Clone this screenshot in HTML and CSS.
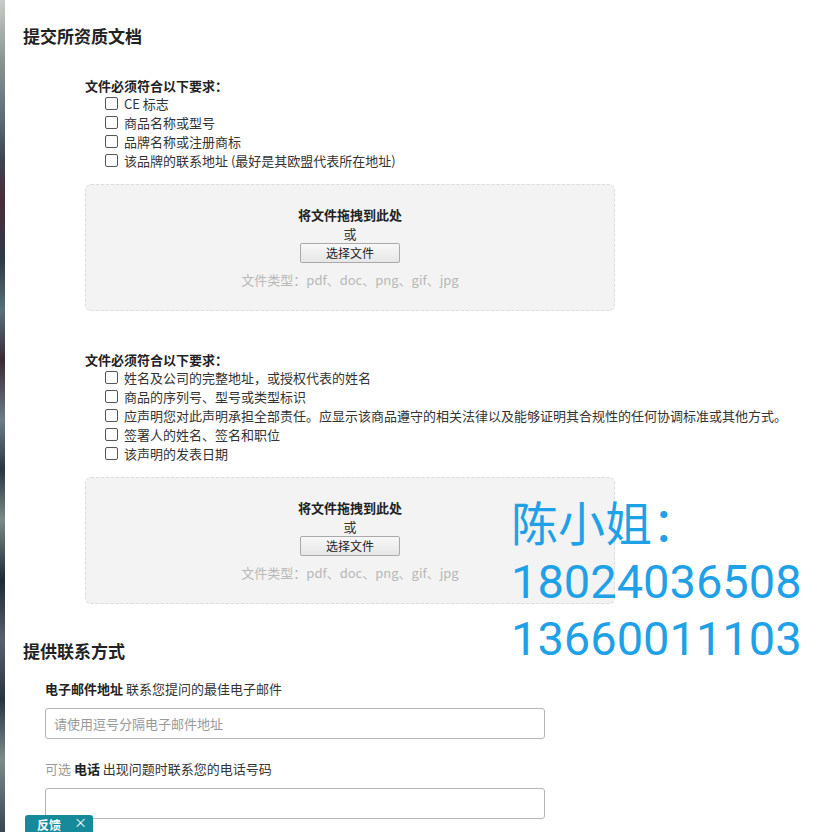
FILE: index.html
```html
<!DOCTYPE html>
<html lang="zh-CN">
<head>
<meta charset="utf-8">
<title>提交所资质文档</title>
<link rel="stylesheet" href="styles.css">
</head>
<body>
<div class="edge"></div>
<main class="page">
  <h2 class="section-title">提交所资质文档</h2>

  <div class="req-block first">
    <div class="req-label">文件必须符合以下要求：</div>
    <ul class="req-list">
      <li><span class="box"></span>CE 标志</li>
      <li><span class="box"></span>商品名称或型号</li>
      <li><span class="box"></span>品牌名称或注册商标</li>
      <li><span class="box"></span>该品牌的联系地址 (最好是其欧盟代表所在地址)</li>
    </ul>
    <div class="dropzone">
      <div class="drop-title">将文件拖拽到此处</div>
      <div class="drop-or">或</div>
      <button class="choose" type="button">选择文件</button>
      <div class="drop-types">文件类型：pdf、doc、png、gif、jpg</div>
    </div>
  </div>

  <div class="req-block second">
    <div class="req-label">文件必须符合以下要求：</div>
    <ul class="req-list">
      <li><span class="box"></span>姓名及公司的完整地址，或授权代表的姓名</li>
      <li><span class="box"></span>商品的序列号、型号或类型标识</li>
      <li><span class="box"></span>应声明您对此声明承担全部责任。应显示该商品遵守的相关法律以及能够证明其合规性的任何协调标准或其他方式。</li>
      <li><span class="box"></span>签署人的姓名、签名和职位</li>
      <li><span class="box"></span>该声明的发表日期</li>
    </ul>
    <div class="dropzone">
      <div class="drop-title">将文件拖拽到此处</div>
      <div class="drop-or">或</div>
      <button class="choose" type="button">选择文件</button>
      <div class="drop-types">文件类型：pdf、doc、png、gif、jpg</div>
    </div>
  </div>

  <h2 class="section-title contact">提供联系方式</h2>

  <div class="field">
    <div class="field-label"><b>电子邮件地址</b> 联系您提问的最佳电子邮件</div>
    <input class="text-input" type="text" placeholder="请使用逗号分隔电子邮件地址">
  </div>
  <div class="field phone">
    <div class="field-label"><span class="opt">可选</span> <b>电话</b> 出现问题时联系您的电话号码</div>
    <input class="text-input" type="text">
  </div>
</main>

<div class="watermark">陈小姐：<br>18024036508<br>13660011103</div>

<div class="feedback"><span class="fb-text">反馈</span><span class="fb-close">×</span></div>
</body>
</html>
```

FILE: styles.css
```css
html, body {
  margin: 0;
  padding: 0;
  background: #ffffff;
}
body {
  font-family: "Noto Sans CJK SC", "Noto Sans", "Liberation Sans", sans-serif;
  font-size: 13px;
  color: #222;
  width: 834px;
  height: 832px;
  overflow: hidden;
  position: relative;
}
.edge {
  position: absolute;
  left: 0;
  top: 0;
  width: 5px;
  height: 832px;
  background: linear-gradient(to bottom, #c9ccc8 0, #8a9590 60px, #5d6a78 120px, #3c4450 160px, #4a2c38 200px, #2e3a44 260px, #58707c 310px, #3a2a34 360px, #6a7e88 420px, #2a3640 470px, #7a8a86 520px, #1e2a34 580px, #5a5e72 640px, #2a3440 700px, #7e8a8a 760px, #3a4650 832px);
}
.page {
  padding: 24px 0 0 23px;
}
.section-title {
  margin: 0;
  font-size: 17px;
  line-height: 24px;
  font-weight: bold;
  color: #222;
}
.req-block {
  margin-left: 62px;
  width: 530px;
}
.req-block.first { margin-top: 29px; }
.req-block.second { margin-top: 40px; }
.req-label {
  font-weight: bold;
  line-height: 17px;
  color: #222;
}
.req-list {
  list-style: none;
  margin: 0;
  padding: 0 0 0 20px;
  white-space: nowrap;
}
.req-list li {
  line-height: 19px;
  height: 19px;
  display: flex;
  align-items: center;
  color: #333;
}
.box {
  width: 11px;
  height: 11px;
  border: 1px solid #555;
  border-radius: 2px;
  background: #fff;
  margin-right: 6px;
  flex: none;
}
.dropzone {
  margin-top: 14px;
  border: 1px dashed #dcdcdc;
  border-radius: 6px;
  background: #f3f3f3;
  padding: 20px 0 21px;
  display: flex;
  flex-direction: column;
  align-items: center;
  box-sizing: border-box;
  height: 127px;
}
.drop-title {
  font-weight: bold;
  line-height: 19px;
  color: #222;
}
.drop-or {
  line-height: 19px;
  color: #333;
}
.choose {
  width: 100px;
  height: 20px;
  padding: 0;
  border: 1px solid #a9a9a9;
  border-radius: 2px;
  background: linear-gradient(#f8f8f8, #e6e6e6);
  font-family: inherit;
  font-size: 12px;
  line-height: 18px;
  color: #222;
}
.drop-types {
  margin-top: 7px;
  line-height: 19px;
  color: #b8b8b8;
}
.section-title.contact {
  margin-top: 35px;
}
.field {
  margin-left: 22px;
  margin-top: 16px;
}
.field.phone { margin-top: 20px; }
.field-label {
  line-height: 19px;
  color: #333;
}
.field-label b { color: #222; }
.opt { color: #999; }
.text-input {
  display: block;
  margin-top: 10px;
  width: 500px;
  height: 31px;
  box-sizing: border-box;
  border: 1px solid #b5b5b5;
  border-radius: 3px;
  padding: 0 8px;
  font-family: inherit;
  font-size: 13px;
  color: #333;
  background: #fff;
}
.text-input::placeholder { color: #999; }
.watermark {
  position: absolute;
  left: 511px;
  top: 496px;
  font-family: Roboto, "Noto Sans CJK SC", sans-serif;
  font-size: 47px;
  line-height: 57px;
  color: #1fa1e7;
  white-space: nowrap;
}
.feedback {
  position: absolute;
  left: 25px;
  top: 815px;
  width: 68px;
  height: 20px;
  background: #168a9b;
  border-radius: 3px 3px 0 0;
  color: #fff;
  box-sizing: border-box;
  padding: 0 6px 0 12px;
  display: flex;
  justify-content: space-between;
  font-size: 12px;
  line-height: 20px;
}
.fb-text { font-weight: bold; }
.fb-close { font-size: 13px; line-height: 14px; }
```
